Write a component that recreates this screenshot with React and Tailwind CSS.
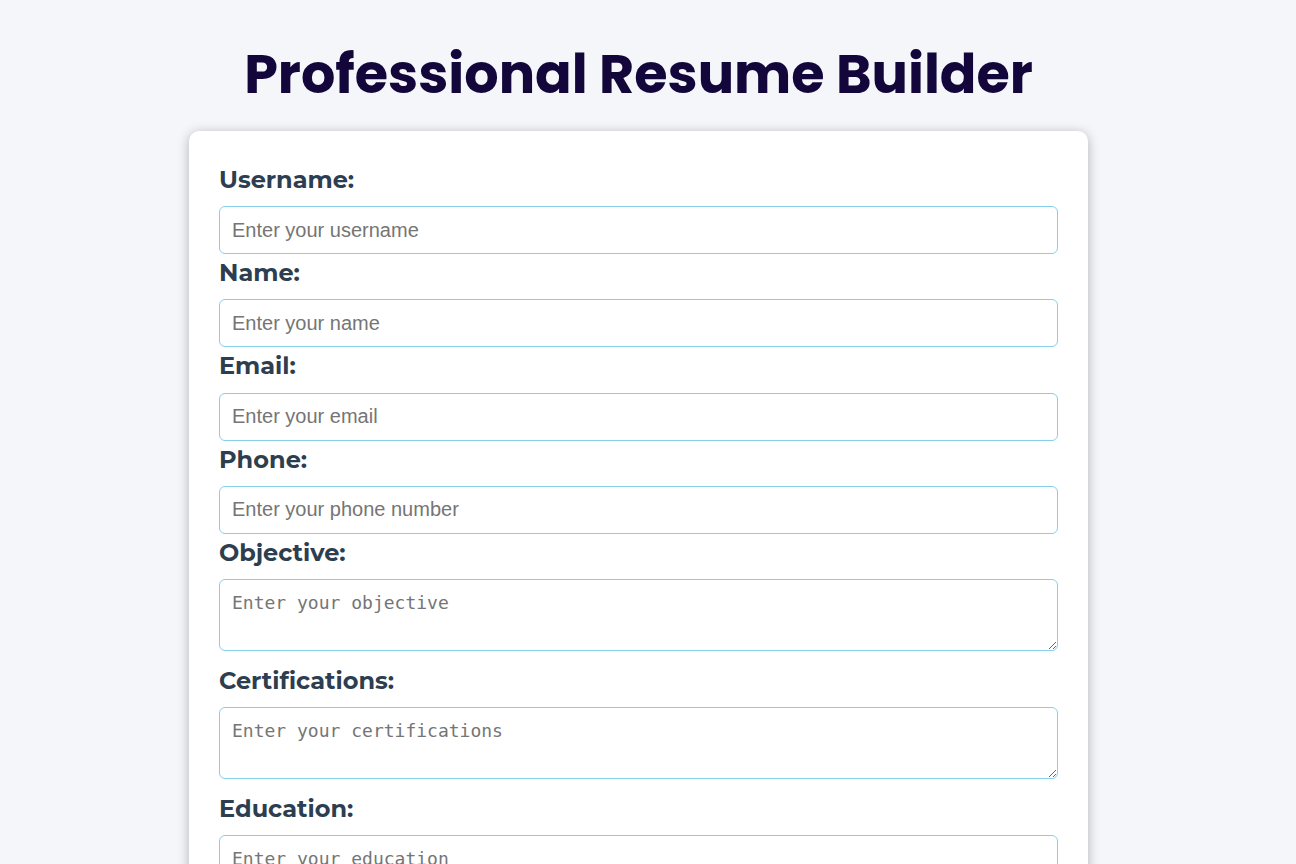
const fields = [
  { label: "Username:", placeholder: "Enter your username" },
  { label: "Name:", placeholder: "Enter your name" },
  { label: "Email:", placeholder: "Enter your email" },
  { label: "Phone:", placeholder: "Enter your phone number" },
];

const areas = [
  { label: "Objective:", placeholder: "Enter your objective" },
  { label: "Certifications:", placeholder: "Enter your certifications" },
  { label: "Education:", placeholder: "Enter your education" },
  { label: "Experience:", placeholder: "Enter your experience" },
  { label: "Skills:", placeholder: "Enter your skills" },
];

const labelCls =
  "block text-[24px] leading-[38.2px] mb-[7px] font-bold text-[#2c3e50] font-['Montserrat','Open_Sans',sans-serif]";

export default function App() {
  return (
    <div className="min-h-screen bg-[#f5f6fa] pt-[34px] pb-10 pr-[19px]">
      <h1 className="text-center text-[54px] leading-[80px] font-bold text-[#12063b] font-['Poppins','Noto_Sans',sans-serif] mb-[17px]">
        Professional Resume Builder
      </h1>

      <div className="w-[899px] mx-auto bg-white rounded-[10px] shadow-[0_2px_12px_rgba(0,0,0,0.28)] p-[30px]">
        {fields.map((f) => (
          <div key={f.label}>
            <label className={labelCls}>{f.label}</label>
            <input
              type="text"
              placeholder={f.placeholder}
              className="block w-full h-[48px] px-3 border border-[#87ceeb] rounded-[6px] text-[20px] font-['Liberation_Sans',Arial,sans-serif] placeholder:text-[#757575] outline-none"
            />
          </div>
        ))}
        {areas.map((a) => (
          <div key={a.label}>
            <label className={labelCls}>{a.label}</label>
            <textarea
              placeholder={a.placeholder}
              className="block w-full h-[72px] p-3 mb-[11px] border border-[#87ceeb] rounded-[6px] text-[18px] leading-[22px] font-['DejaVu_Sans_Mono','Liberation_Mono',monospace] placeholder:text-[#757575] outline-none"
            />
          </div>
        ))}
      </div>
    </div>
  );
}
